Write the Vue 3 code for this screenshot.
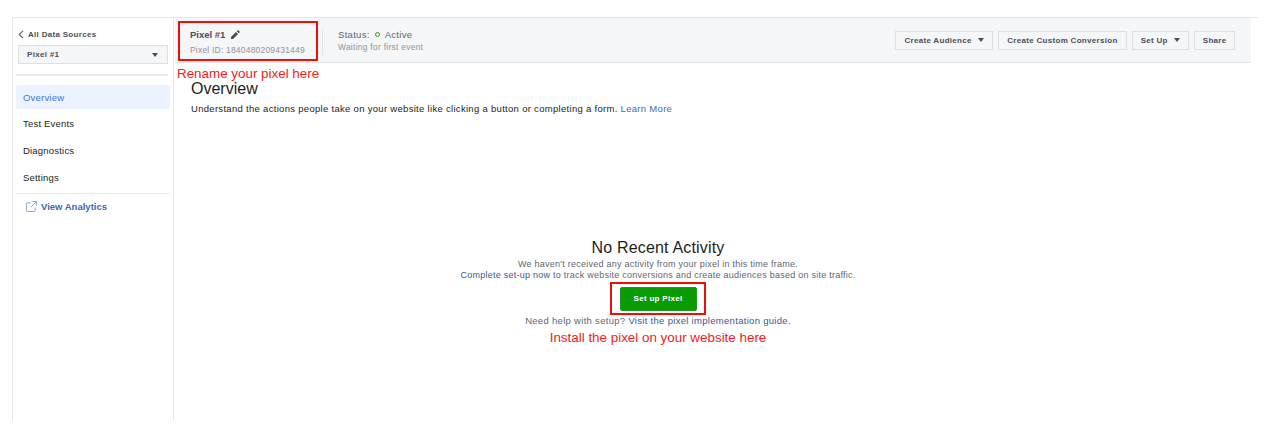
<template>
  <div class="page">
    <aside class="sidebar">
      <div class="sidebar__top">
        <a class="back">
          <svg width="6" height="9" viewBox="0 0 6 9"><path d="M5 .8 1.3 4.5 5 8.2" fill="none" stroke="#606770" stroke-width="1.2" /></svg>
          All Data Sources
        </a>
        <div class="picker">
          <span>Pixel #1</span>
          <i class="caret"></i>
        </div>
      </div>
      <nav class="nav">
        <a
          v-for="item in navItems"
          :key="item"
          class="nav__item"
          :class="{ 'nav__item--active': item === 'Overview' }"
        >{{ item }}</a>
      </nav>
      <a class="analytics">
        <svg width="11" height="11" viewBox="0 0 12 12" fill="none" stroke="#7d9fd6" stroke-width="1">
          <path d="M5 2H1.5a1 1 0 0 0-1 1v7.5a1 1 0 0 0 1 1H9a1 1 0 0 0 1-1V7" />
          <path d="M7 .6h4.4V5M11.2.8 5.5 6.5" />
        </svg>
        View Analytics
      </a>
    </aside>

    <main class="main">
      <header class="bar">
        <div class="pixel">
          <div class="pixel__name">
            Pixel #1
            <svg width="9" height="9" viewBox="0 0 9 9"><path d="M0 9V7l5-5 2 2-5 5zM5.8 1.2 7 0l2 2-1.2 1.2z" fill="#444950" /></svg>
          </div>
          <div class="pixel__id">Pixel ID: 1840480209431449</div>
        </div>
        <div class="status">
          <div class="status__line">Status: <i class="dot"></i> Active</div>
          <div class="status__sub">Waiting for first event</div>
        </div>
        <div class="actions">
          <button class="btn">Create Audience <i class="caret"></i></button>
          <button class="btn">Create Custom Conversion</button>
          <button class="btn">Set Up <i class="caret"></i></button>
          <button class="btn btn--share">Share</button>
        </div>
        <div class="mark mark--pixel"></div>
      </header>

      <div class="content">
        <p class="note note--rename">Rename your pixel here</p>
        <h1 class="title">Overview</h1>
        <p class="lead">
          Understand the actions people take on your website like clicking a button or completing a form.
          <a class="link-blue">Learn More</a>
        </p>

        <section class="empty">
          <h2 class="empty__title">No Recent Activity</h2>
          <p class="empty__text">We haven't received any activity from your pixel in this time frame.</p>
          <p class="empty__text">
            <a class="link">Complete set-up now</a> to track website conversions and create audiences based on site traffic.
          </p>
          <div class="cta">
            <button class="cta__btn">Set up Pixel</button>
          </div>
          <p class="help">Need help with setup? <a class="link">Visit the pixel implementation guide.</a></p>
          <p class="note">Install the pixel on your website here</p>
        </section>
      </div>
    </main>
  </div>
</template>

<script setup>
const navItems = ["Overview", "Test Events", "Diagnostics", "Settings"]
</script>

<style>
html,
body {
  background: #fff;
}
</style>

<style scoped>
.page {
  display: flex;
  width: 1246px;
  height: 403px;
  margin: 17px 0 0 12px;
  border-top: 1px solid #e6e7e9;
  font-family: "Liberation Sans", Arial, sans-serif;
  color: #1c1e21;
  overflow: hidden;
}
.sidebar {
  width: 162px;
  flex: none;
  box-sizing: border-box;
  padding: 0 3px;
  border-left: 1px solid #e6e7e9;
  border-right: 1px solid #e6e7e9;
}
.sidebar__top {
  padding: 10px 0 10px 2px;
  border-bottom: 2px solid #e9eaec;
  margin-right: 2px;
}
.back {
  display: flex;
  align-items: center;
  gap: 4px;
  height: 12px;
  font-size: 8px;
  font-weight: bold;
  letter-spacing: 0.3px;
  color: #4b4f56;
}
.picker {
  display: flex;
  justify-content: space-between;
  align-items: center;
  box-sizing: border-box;
  height: 19px;
  margin-top: 5px;
  padding: 0 9px 0 8px;
  border: 1px solid #dddfe2;
  background: #f5f6f7;
  font-size: 8px;
  font-weight: bold;
  letter-spacing: 0.3px;
  color: #4b4f56;
}
.caret {
  display: inline-block;
  width: 0;
  height: 0;
  border-left: 3.5px solid transparent;
  border-right: 3.5px solid transparent;
  border-top: 4px solid #4b4f56;
}
.nav {
  margin-top: 9px;
  padding-bottom: 1px;
  border-bottom: 1px solid #e9eaec;
}
.nav__item {
  display: flex;
  align-items: center;
  height: 24px;
  margin-bottom: 2.7px;
  padding-left: 7px;
  font-size: 9.5px;
  letter-spacing: 0.2px;
  color: #1c1e21;
}
.nav__item--active {
  background: #ecf3ff;
  border-radius: 2px;
  color: #3578e5;
}
.analytics {
  display: flex;
  align-items: center;
  gap: 4px;
  margin-top: 7px;
  padding-left: 10px;
  font-size: 9.5px;
  font-weight: bold;
  color: #4267b2;
}
.main {
  flex: 1;
  min-width: 0;
  margin-right: 7px;
}
.bar {
  position: relative;
  display: flex;
  align-items: center;
  box-sizing: border-box;
  height: 45px;
  margin-left: 1px;
  padding: 0 16px 0 15px;
  background: #f5f6f7;
  border-bottom: 1px solid #e6e7e9;
}
.pixel {
  width: 132px;
  margin-top: 3px;
  border-right: 1px solid #e2e3e6;
}
.pixel__name {
  display: flex;
  align-items: center;
  gap: 6px;
  font-size: 9.5px;
  font-weight: bold;
  color: #4b4f56;
}
.pixel__id {
  margin-top: 5px;
  font-size: 8.5px;
  letter-spacing: 0.2px;
  color: #90949c;
}
.status {
  margin-left: 15px;
}
.status__line {
  display: flex;
  align-items: center;
  gap: 5px;
  font-size: 9.5px;
  letter-spacing: 0.3px;
  color: #606770;
}
.dot {
  width: 3px;
  height: 3px;
  border: 1px solid #3c9a00;
  border-radius: 50%;
}
.status__sub {
  margin-top: 2px;
  font-size: 8.4px;
  letter-spacing: 0.3px;
  color: #90949c;
}
.actions {
  display: flex;
  gap: 5px;
  margin-left: auto;
}
.btn {
  display: flex;
  align-items: center;
  gap: 6.5px;
  height: 19px;
  padding: 0 8px;
  border: 1px solid #dddfe2;
  background: #f5f6f7;
  font-family: inherit;
  font-size: 8px;
  font-weight: bold;
  letter-spacing: 0.3px;
  color: #4b4f56;
}
.btn--share {
  padding: 0 7.5px;
}
.mark {
  position: absolute;
  box-sizing: border-box;
  border: 2px solid #f10d0c;
}
.mark--pixel {
  left: 3px;
  top: 3px;
  width: 140px;
  height: 40px;
}
.content {
  padding: 0 0 0 17px;
}
.note {
  margin: 0;
  font-size: 13.4px;
  color: #f5211b;
}
.note--rename {
  height: 16px;
  margin: 2px 0 0 -14px;
  line-height: 17px;
}
.title {
  margin: 0;
  font-size: 16px;
  font-weight: normal;
  line-height: 16px;
  color: #1c1e21;
}
.lead {
  margin: 6px 0 0;
  font-size: 9.5px;
  letter-spacing: 0.3px;
  color: #1c1e21;
}
.link-blue {
  color: #3b6db5;
}
.empty {
  width: 968px;
  margin: 123px 0 0 -17px;
  text-align: center;
}
.empty__title {
  margin: 0;
  font-size: 16px;
  font-weight: normal;
  line-height: 22px;
  letter-spacing: 0.17px;
}
.empty__text {
  margin: 0;
  font-size: 9px;
  line-height: 11px;
  letter-spacing: 0.25px;
  color: #606770;
}
.link {
  color: #385898;
}
.cta {
  box-sizing: border-box;
  display: inline-flex;
  align-items: center;
  justify-content: center;
  width: 96px;
  height: 33px;
  margin-top: 1px;
  border: 2px solid #f10d0c;
}
.cta__btn {
  width: 77px;
  height: 24px;
  border: 1px solid #1d9a1d;
  border-radius: 2px;
  background: #0a9b00;
  font-family: inherit;
  font-size: 8px;
  font-weight: bold;
  letter-spacing: 0.3px;
  color: #fff;
}
.help {
  margin: 0;
  font-size: 9.5px;
  letter-spacing: 0.3px;
  color: #606770;
}
.empty .note {
  margin-top: 4px;
}
</style>
